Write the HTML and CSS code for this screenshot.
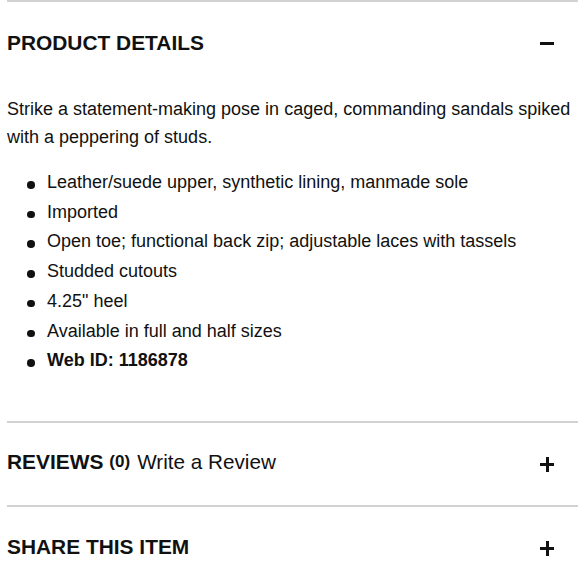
FILE: index.html
```html
<!DOCTYPE html>
<html>
<head>
<meta charset="utf-8">
<link rel="stylesheet" href="styles.css">
</head>
<body>
<div class="page">
  <section class="panel">
    <div class="panel-head">
      <h2 class="title">PRODUCT DETAILS</h2>
      <span class="toggle minus"></span>
    </div>
    <div class="panel-body">
      <p class="desc">Strike a statement-making pose in caged, commanding sandals spiked with a peppering of studs.</p>
      <ul class="bullets">
        <li>Leather/suede upper, synthetic lining, manmade sole</li>
        <li>Imported</li>
        <li>Open toe; functional back zip; adjustable laces with tassels</li>
        <li>Studded cutouts</li>
        <li>4.25" heel</li>
        <li>Available in full and half sizes</li>
        <li class="strong">Web ID: 1186878</li>
      </ul>
    </div>
  </section>
  <section class="panel">
    <div class="panel-head">
      <h2 class="title">REVIEWS <span class="count">(0)</span> <span class="write">Write a Review</span></h2>
      <span class="toggle plus"></span>
    </div>
  </section>
  <section class="panel">
    <div class="panel-head">
      <h2 class="title">SHARE THIS ITEM</h2>
      <span class="toggle plus"></span>
    </div>
  </section>
</div>
</body>
</html>
```
FILE: styles.css
```css
html, body {
  margin: 0;
  padding: 0;
  background: #fff;
}
body {
  font-family: "Liberation Sans", Arial, sans-serif;
  color: #111;
}
.page {
  padding: 0 2px 0 7px;
}
.panel {
  border-top: 2px solid #d2d2d2;
}
.panel-head {
  height: 82px;
  display: flex;
  align-items: center;
  justify-content: space-between;
}
.title {
  margin: 0 0 1px;
  font-size: 20.9px;
  line-height: 24px;
  font-weight: bold;
  color: #111;
  display: flex;
  align-items: baseline;
}
.count {
  font-size: 17px;
  margin-left: 6px;
  position: relative;
  top: -2px;
}
.write {
  font-weight: normal;
  font-size: 20.7px;
  margin-left: 7px;
}
.toggle {
  width: 14px;
  height: 14px;
  margin-right: 24px;
  position: relative;
}
.toggle::before,
.toggle::after {
  content: "";
  position: absolute;
  background: #111;
}
.minus::before {
  left: 0;
  top: 6px;
  width: 14px;
  height: 3px;
}
.minus::after {
  display: none;
}
.plus::before {
  left: 0;
  top: 6px;
  width: 14px;
  height: 3px;
}
.plus::after {
  left: 5.5px;
  top: 0;
  width: 3px;
  height: 15px;
}
.panel-body {
  padding-top: 11px;
  padding-bottom: 45px;
}
.desc {
  margin: 0;
  font-size: 18px;
  line-height: 28px;
}
.bullets {
  margin: 17px 0 0;
  padding-left: 40px;
  font-size: 18px;
  line-height: 29.7px;
  list-style: none;
}
.bullets li {
  position: relative;
}
.bullets li::before {
  content: "";
  position: absolute;
  left: -20px;
  top: 13px;
  width: 7.5px;
  height: 7.5px;
  border-radius: 50%;
  background: #111;
}
.strong {
  font-weight: bold;
}
```
